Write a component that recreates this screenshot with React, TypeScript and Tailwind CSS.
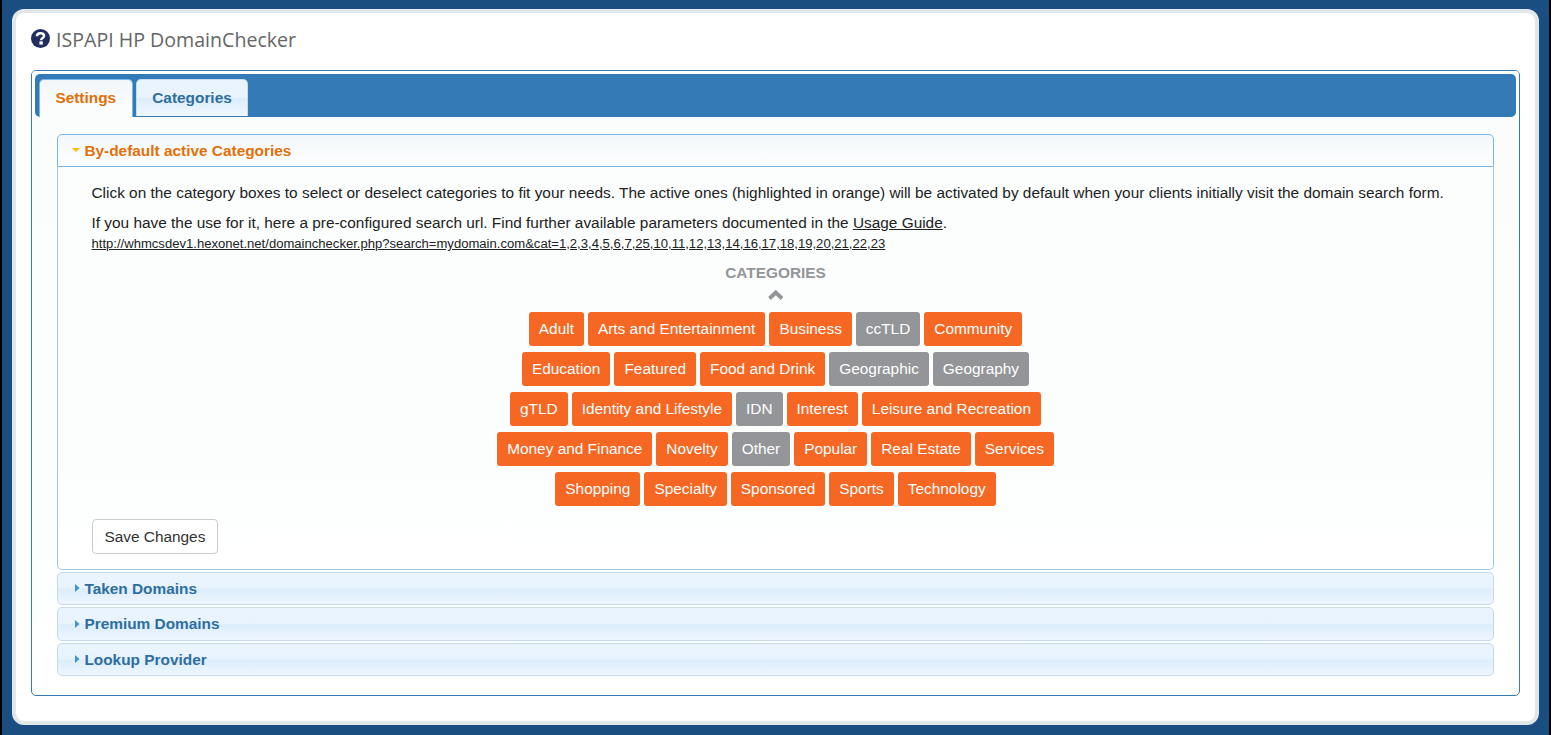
type Category = { name: string; active: boolean };

const on = (name: string): Category => ({ name, active: true });
const off = (name: string): Category => ({ name, active: false });

const categoryRows: Category[][] = [
  [on("Adult"), on("Arts and Entertainment"), on("Business"), off("ccTLD"), on("Community")],
  [on("Education"), on("Featured"), on("Food and Drink"), off("Geographic"), off("Geography")],
  [on("gTLD"), on("Identity and Lifestyle"), off("IDN"), on("Interest"), on("Leisure and Recreation")],
  [on("Money and Finance"), on("Novelty"), off("Other"), on("Popular"), on("Real Estate"), on("Services")],
  [on("Shopping"), on("Specialty"), on("Sponsored"), on("Sports"), on("Technology")],
];

function QuestionIcon({ className }: { className: string }) {
  return (
    <svg className={className} viewBox="0 0 19 19">
      <circle cx="9.5" cy="9.5" r="9.5" fill="currentColor" />
      <path
        d="M6 7.2C6 5.1 7.4 4.3 9.6 4.3C11.9 4.3 13 5.3 13 6.9C13 8.9 10.2 8.9 10.2 11.3"
        fill="none"
        stroke="#ffffff"
        strokeWidth="2.5"
      />
      <path d="M8.4 12.4H11.8V15.6H8.4Z" fill="#ffffff" />
    </svg>
  );
}

function CategoryBox({ name, active }: Category) {
  return (
    <button
      className={`h-[34px] rounded-[3px] px-[10px] leading-[34px] whitespace-nowrap text-white ${
        active ? "bg-[#f56723]" : "bg-[#939598]"
      }`}
    >
      {name}
    </button>
  );
}

function CollapsedHeader({ title, size }: { title: string; size: string }) {
  return (
    <h3
      className={`mt-[2px] flex items-center rounded-[5px] border border-[#c5dbec] bg-[linear-gradient(to_bottom,#eaf4fd_0%,#e8f3fd_48%,#dcedfc_52%,#eef6fe_100%)] pl-[17px] font-bold text-[#2e6e9e] ${size}`}
    >
      <svg className="mr-[4.4px] mb-px h-2 w-[5px]" viewBox="0 0 5 8" fill="#3d94db">
        <path d="M0 0L4.5 4L0 8Z" />
      </svg>
      {title}
    </h3>
  );
}

export default function App() {
  return (
    <div className="h-[735px] w-full border-x-2 border-black bg-[#1a4d80] px-[10px] pt-[9px] font-['Liberation_Sans',Arial,sans-serif] text-[15.4px] text-[#222222]">
      <main className="h-[716px] rounded-[12px] border-4 border-[#e2e7ea] bg-white px-[15px]">
        <h1 className="flex h-[57px] items-center gap-[6px] pb-[4px] font-['Open_Sans',sans-serif] text-[19.6px] font-normal text-[#666666]">
          <QuestionIcon className="mb-[2px] size-[19px] text-[#202f60]" />
          <span>ISPAPI HP DomainChecker</span>
        </h1>
        <section className="h-[626px] rounded-[5px] border border-[#337ab7] bg-[linear-gradient(to_bottom,#fbfdfd_0%,#fcfefe_75%,#ffffff_100%)] p-[3px]">
          <nav className="-mx-[3px] -mt-[3px] rounded-t-[4px] bg-white px-[3px] pt-[3px]">
            <div className="flex h-[43px] items-start gap-[3px] rounded-[5px] bg-[#337ab7] pt-[5px] pl-[4px] font-bold">
              <a className="h-[38px] w-[94px] rounded-t-[5px] border border-b-0 border-[#79b7e7] bg-[linear-gradient(to_bottom,#f2f6f9,#fbfdfd_75%)] pl-[15.4px] leading-[36px] text-[#e17009]">
                Settings
              </a>
              <a className="h-[37px] w-[112px] rounded-t-[5px] border border-b-0 border-[#c5dbec] bg-[linear-gradient(to_bottom,#eaf4fd_0%,#e8f3fd_48%,#dcedfc_52%,#f0f7fe_100%)] text-center leading-[36px] text-[#2e6e9e]">
                Categories
              </a>
            </div>
          </nav>
          <div className="px-[22px] pt-[17px]">
            <h3 className="flex h-[33px] items-center rounded-t-[5px] border border-[#79b7e7] bg-[linear-gradient(to_bottom,#f3f7fa,#fbfdfd_80%)] pl-[14px] font-bold text-[#e17009]">
              <svg className="mr-[4.4px] mb-[2px] h-[4px] w-2" viewBox="0 0 8 4" fill="#f9bd01">
                <path d="M0 0H8L4 4Z" />
              </svg>
              By-default active Categories
            </h3>
            <div className="h-[403px] rounded-b-[5px] border border-t-0 border-[#a6c9e2] bg-[linear-gradient(to_bottom,#fcfefe_0%,#fcfefe_75%,#ffffff_100%)] px-[33.5px] pt-[15px]">
              <p className="h-[30px] leading-[22px] whitespace-nowrap">
                Click on the category boxes to select or deselect categories to fit your needs. The active ones
                (highlighted in orange) will be activated by default when your clients initially visit the domain
                search form.
              </p>
              <p className="h-[22px] leading-[22px]">
                If you have the use for it, here a pre-configured search url. Find further available parameters
                documented in the <a className="underline">Usage Guide</a>.
              </p>
              <a className="block h-[28px] text-[13.09px] leading-[20px] underline">
                http://whmcsdev1.hexonet.net/domainchecker.php?search=mydomain.com&amp;cat=1,2,3,4,5,6,7,25,10,11,12,13,14,16,17,18,19,20,21,22,23
              </a>
              <div className="flex flex-col items-center">
                <h4 className="h-[28px] leading-[22px] font-bold text-[#939598]">CATEGORIES</h4>
                <svg
                  className="mb-[12px] h-[10px] w-[15.5px]"
                  viewBox="0 0 15.5 10"
                  fill="none"
                  stroke="#939598"
                  strokeWidth="3.9"
                >
                  <path d="M1.5 8.5L7.75 2.5L14 8.5" />
                </svg>
                <div className="flex flex-col items-center gap-[6px]">
                  {categoryRows.map((row) => (
                    <div key={row[0].name} className="flex gap-[4px]">
                      {row.map((category) => (
                        <CategoryBox key={category.name} {...category} />
                      ))}
                    </div>
                  ))}
                </div>
              </div>
              <button className="mt-[13px] h-[35px] w-[126px] rounded-[4px] border border-[#cccccc] bg-white pl-[0.8px] text-[#333333]">
                Save Changes
              </button>
            </div>
            <CollapsedHeader title="Taken Domains" size="h-[33px]" />
            <CollapsedHeader title="Premium Domains" size="h-[34px]" />
            <CollapsedHeader title="Lookup Provider" size="h-[33px]" />
          </div>
        </section>
      </main>
    </div>
  );
}
